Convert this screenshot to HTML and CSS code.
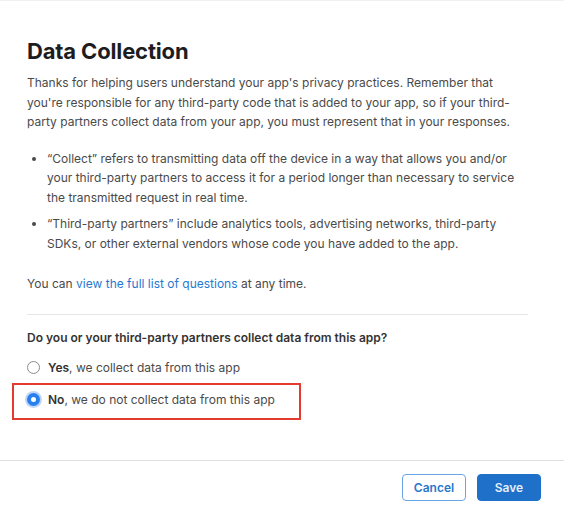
FILE: index.html
```html
<!DOCTYPE html>
<html lang="en">
<head>
<meta charset="utf-8">
<title>Data Collection</title>
<link rel="stylesheet" href="styles.css">
</head>
<body>
<div class="dialog">
  <div class="content">
    <h1 class="title">Data Collection</h1>
    <p class="text">Thanks for helping users understand your app's privacy practices. Remember that<br>you're responsible for any third-party code that is added to your app, so if your third-<br>party partners collect data from your app, you must represent that in your responses.</p>
    <ul class="bullets">
      <li class="bullet">“Collect” refers to transmitting data off the device in a way that allows you and/or<br>your third-party partners to access it for a period longer than necessary to service<br>the transmitted request in real time.</li>
      <li class="bullet">“Third-party partners” include analytics tools, advertising networks, third-party<br>SDKs, or other external vendors whose code you have added to the app.</li>
    </ul>
    <p class="text text-after-list">You can <a class="link" href="#">view the full list of questions</a> at any time.</p>
    <div class="divider"></div>
    <p class="question">Do you or your third-party partners collect data from this app?</p>
    <div class="options">
      <label class="option">
        <span class="radio"></span>
        <span class="option-text"><b class="strong">Yes</b>, we collect data from this app</span>
      </label>
      <label class="option option-highlight">
        <span class="radio radio-checked"></span>
        <span class="option-text"><b class="strong">No</b>, we do not collect data from this app</span>
      </label>
    </div>
  </div>
  <div class="footer">
    <button class="btn btn-secondary">Cancel</button>
    <button class="btn btn-primary">Save</button>
  </div>
</div>
</body>
</html>
```
FILE: styles.css
```css
* { box-sizing: border-box; }
html, body { margin: 0; padding: 0; background: #fff; }
body {
  font-family: Inter, "Noto Sans", sans-serif;
  color: #4a4a4a;
  font-size: 12px;
}
.dialog {
  width: 564px;
  height: 523px;
  border-top: 1px solid #f0f0f0;
  display: flex;
  flex-direction: column;
}
.content {
  padding: 36px 36px 0 27px;
  flex: 1;
}
.title {
  margin: 0;
  font-size: 22px;
  line-height: 28px;
  font-weight: 700;
  color: #1d1d1f;
  letter-spacing: -0.15px;
}
.text {
  margin: 8px 0 0;
  line-height: 19.5px;
}
.bullets {
  margin: 17px 0 0;
  padding: 0 0 0 20px;
}
.bullet {
  line-height: 19.5px;
  margin-bottom: 7px;
}
.text-after-list { margin-top: 21px; }
.link { color: #1f7ad0; text-decoration: none; }
.divider {
  height: 1px;
  background: #e6e6e6;
  margin: 20px 0 0;
  width: 501px;
}
.question {
  margin: 13px 0 0;
  font-weight: 600;
  color: #333;
  line-height: 19px;
}
.options {
  margin-top: 10px;
  display: flex;
  flex-direction: column;
  gap: 4px;
}
.option {
  display: flex;
  align-items: center;
  gap: 8px;
  height: 22px;
}
.option-highlight {
  margin-left: -15px;
  width: 289px;
  height: 37px;
  padding: 0 0 4px 13px;
  border: 2px solid #e53a2f;
}
.radio {
  width: 13px;
  height: 13px;
  border-radius: 50%;
  border: 1px solid #8a8a8a;
  background: #fff;
  flex: none;
}
.radio-checked {
  border: 4px solid #2a7ff0;
  background: #fff;
  box-shadow: 0 0 0 2px #bcd6f7;
}
.strong { font-weight: 600; color: #333; }
.footer {
  border-top: 1px solid #e0e0e0;
  height: 63px;
  padding: 13px 23px 0 0;
  display: flex;
  justify-content: flex-end;
  align-items: flex-start;
  gap: 11px;
}
.btn {
  width: 64px;
  height: 27px;
  border-radius: 4px;
  font-family: Inter, "Noto Sans", sans-serif;
  font-size: 12px;
  font-weight: 600;
  padding: 0;
  cursor: pointer;
}
.btn-secondary {
  background: #fff;
  border: 1px solid #6ba6e4;
  color: #2a78c9;
}
.btn-primary {
  background: #1f70c9;
  border: 1px solid #1f70c9;
  color: #e6eef8;
}
```
